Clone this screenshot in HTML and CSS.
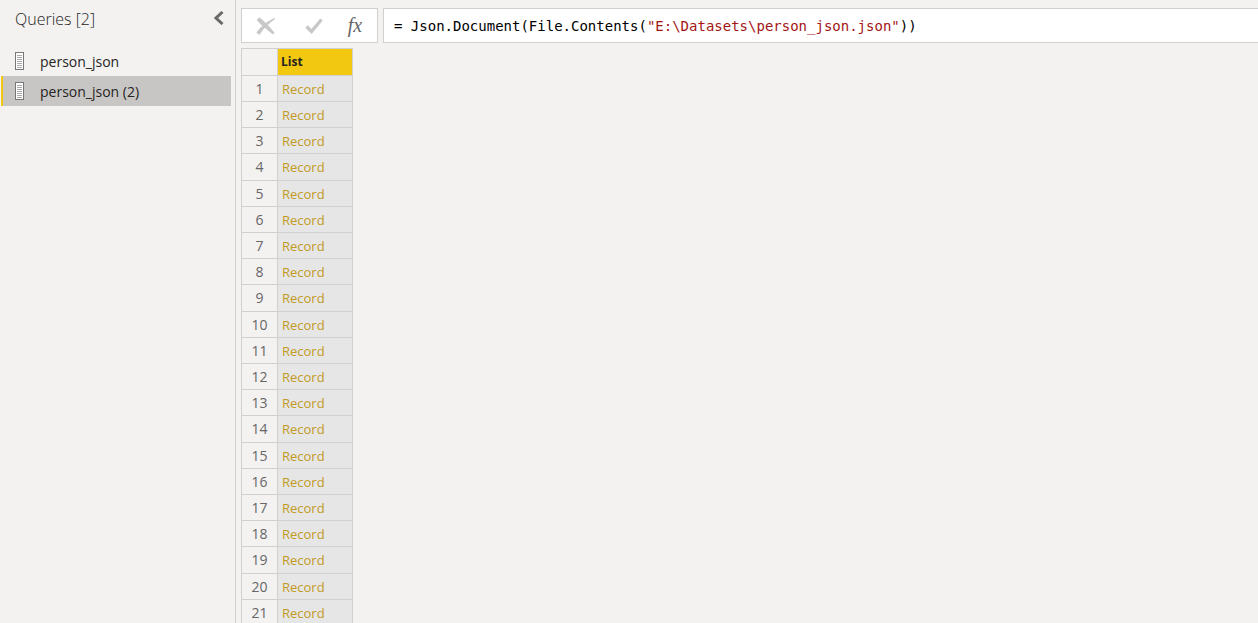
FILE: index.html
```html
<!DOCTYPE html>
<html lang="en">
<head>
    <meta charset="UTF-8">
    <meta name="viewport" content="width=device-width, initial-scale=1.0">
    <title>Query Editor</title>
    <link rel="stylesheet" href="styles.css">
</head>
<body>
    <aside class="queries">
        <header class="queries-header">
            <h1>Queries [2]</h1>
            <button type="button" class="collapse" aria-label="Collapse queries">
                <svg width="10" height="14" viewBox="0 0 10 14"><path d="M8.5 1 L2 7 L8.5 13" fill="none" stroke="#6a6a6a" stroke-width="3"/></svg>
            </button>
        </header>
        <nav class="query-list">
            <a href="#person_json">
                <svg width="9" height="18" viewBox="0 0 9 18"><rect x="0.5" y="0.5" width="8" height="17" fill="#fff" stroke="#777"/><path d="M2 3.5h5M2 5.5h5M2 7.5h5M2 9.5h5M2 11.5h5M2 13.5h5M2 15.5h5" stroke="#aaa"/></svg>
                person_json
            </a>
            <a href="#person_json_2" class="selected">
                <svg width="9" height="18" viewBox="0 0 9 18"><rect x="0.5" y="0.5" width="8" height="17" fill="#fff" stroke="#777"/><path d="M2 3.5h5M2 5.5h5M2 7.5h5M2 9.5h5M2 11.5h5M2 13.5h5M2 15.5h5" stroke="#aaa"/></svg>
                person_json (2)
            </a>
        </nav>
    </aside>

    <main class="editor">
        <div class="formula-bar">
            <div class="formula-buttons">
                <button type="button" aria-label="Cancel">
                    <svg width="20" height="18" viewBox="0 0 20 18"><path d="M0.6 3 L3.4 0.2 C8 4 13.5 9.5 18.6 15.8 L17 17.4 C11 13 5.5 8.5 0.6 3Z M19.2 2 C13 6 8 11 3.4 18 L0.4 15.4 C5 9.5 11 4 18.6 1Z" fill="#c8c8c8"/></svg>
                </button>
                <button type="button" aria-label="Apply">
                    <svg width="18" height="16" viewBox="0 0 18 16"><path d="M1.5 8.5 L6.5 13.5 L16.5 1.5" fill="none" stroke="#c8c8c8" stroke-width="3.4"/></svg>
                </button>
                <button type="button" class="fx" aria-label="Add step">fx</button>
            </div>
            <div class="formula" role="textbox" aria-label="Formula" contenteditable="true" spellcheck="false">= Json.Document(File.Contents(<span class="string">"E:\Datasets\person_json.json"</span>))</div>
        </div>

        <table class="grid">
            <thead>
                <tr><th></th><th class="list">List</th></tr>
            </thead>
            <tbody id="rows"></tbody>
        </table>
    </main>

    <script>
        // Fill the list with its records
        const rows = document.getElementById("rows");
        const recordCount = 21;

        for (let i = 1; i <= recordCount; i++) {
            rows.innerHTML += `
                <tr>
                    <th scope="row">${i}</th>
                    <td><a href="#record-${i}">Record</a></td>
                </tr>
            `;
        }
    </script>
</body>
</html>
```
FILE: styles.css
```css
/* Global Styles */
* {
    box-sizing: border-box;
}

body {
    font-family: "Segoe UI", "Open Sans", sans-serif;
    margin: 0;
    height: 100vh;
    display: flex;
    overflow: hidden;
    background-color: #f3f2f1;
    color: #252423;
}

a {
    text-decoration: none;
}

button {
    display: flex;
    align-items: center;
    justify-content: center;
    padding: 0;
    border: none;
    background: none;
    cursor: pointer;
}

/* Queries pane */
.queries {
    flex: 0 0 236px;
    border-right: 1px solid #d0d0d0;
    padding: 0 4px 0 1px;
}

.queries-header {
    display: flex;
    justify-content: space-between;
    height: 46px;
    padding: 8px 7px 0 14px;
}

    .queries-header h1 {
        margin: 0;
        font-size: 16px;
        font-weight: 300;
        line-height: 22px;
    }

.collapse {
    width: 10px;
    height: 20px;
}

.query-list a {
    display: flex;
    align-items: center;
    gap: 16px;
    height: 30px;
    padding-left: 12px;
    border-left: 2px solid transparent;
    font-size: 14px;
    color: #252423;
}

    .query-list a.selected {
        background-color: #c8c6c4;
        border-left-color: #f2c811;
    }

/* Formula bar */
.editor {
    flex: 1;
    min-width: 0;
    padding: 8px 0 0 5px;
}

.formula-bar {
    display: flex;
    gap: 5px;
    height: 35px;
    margin-bottom: 5px;
}

.formula-buttons {
    display: grid;
    grid-template-columns: 48px 48px 34px;
    flex: 0 0 137px;
    border: 1px solid #d0d0d0;
    background-color: #fff;
}

.fx {
    font-family: "Liberation Serif", serif;
    font-size: 20px;
    font-style: italic;
    color: #666;
}

.formula {
    flex: 1;
    padding-left: 10px;
    border: 1px solid #d0d0d0;
    border-right: none;
    background-color: #fff;
    font-family: Consolas, "DejaVu Sans Mono", monospace;
    font-size: 14px;
    line-height: 34px;
    white-space: pre;
    overflow: hidden;
    color: #000;
}

    .formula .string {
        color: #a31515;
    }

/* Records */
.grid {
    width: 111px;
    table-layout: fixed;
    border-collapse: collapse;
}

    .grid th,
    .grid td {
        height: 26px;
        padding: 0;
        border: 1px solid #d0d0d0;
        line-height: 22px;
    }

    .grid thead th {
        width: 36px;
        height: 27px;
    }

    .grid thead .list {
        width: 75px;
        padding-left: 3px;
        background-color: #f2c811;
        font-size: 12px;
        font-weight: 700;
        text-align: left;
    }

    .grid tbody th {
        font-size: 14px;
        font-weight: 400;
        color: #666;
    }

    .grid td {
        padding-left: 4px;
        background-color: #e6e6e6;
        font-size: 13px;
    }

    .grid tbody tr:nth-child(5n+4) th {
        height: 27px;
    }

    .grid td a {
        color: #c19a24;
    }
```
